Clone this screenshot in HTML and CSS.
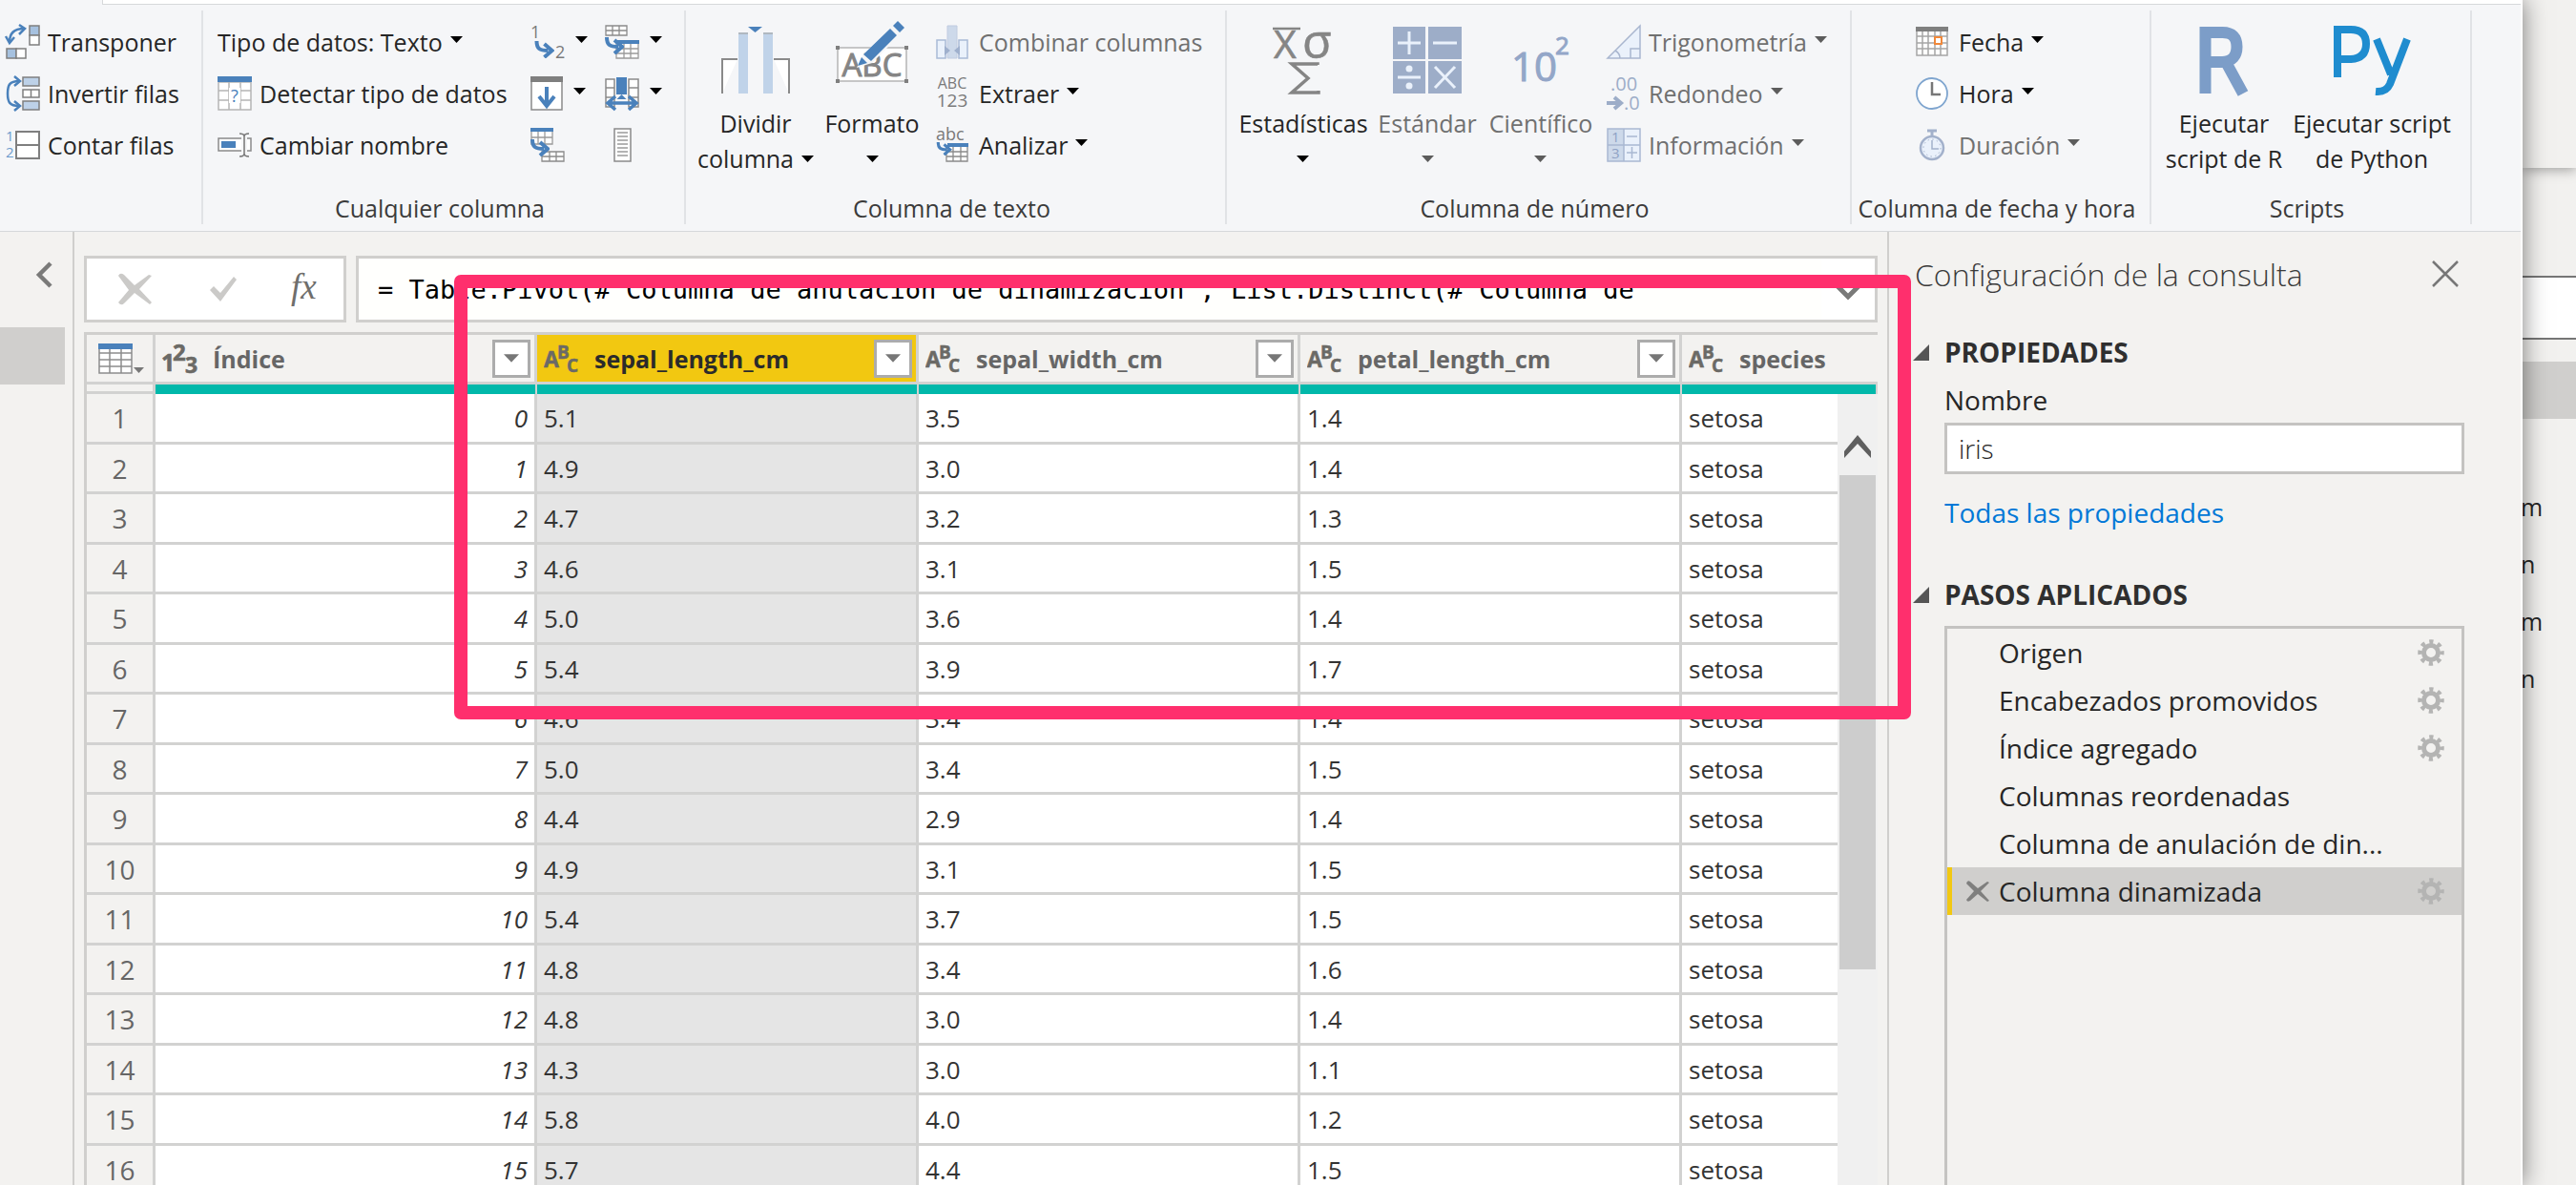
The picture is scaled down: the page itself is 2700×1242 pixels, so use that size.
FILE: index.html
```html
<!DOCTYPE html>
<html lang="es">
<head>
<meta charset="utf-8">
<meta name="viewport" content="width=device-width, initial-scale=1">
<title>Editor de Power Query</title>
<link rel="stylesheet" href="styles.css">
</head>
<body>
<svg class="defs" aria-hidden="true">
  <symbol id="caret" viewBox="0 0 13 7"><path d="M0 0h13L6.500 7z" fill="currentColor"/></symbol>
  <symbol id="gear" viewBox="0 0 28 28"><g fill="none" stroke="#b4b4b3"><circle cx="14" cy="14" r="7.500" stroke-width="5"/><circle cx="14" cy="14" r="11.500" stroke-width="4.500" stroke-dasharray="4.200 4.832" stroke-dashoffset="2.100"/></g></symbol>
  <symbol id="abc" viewBox="0 0 37 32"><g fill="#6b6a66" stroke="#6b6a66" stroke-width=".5" font-family="Open Sans, sans-serif"><text x="0" y="25" font-size="23">A</text><text x="14" y="16" font-size="19">B</text><text x="24" y="30" font-size="19">C</text></g></symbol>
  <symbol id="bend" viewBox="0 0 20 18"><path d="M2 0c0 8 3 10 12 10" fill="none" stroke="#4a81bb" stroke-width="4"/><path d="M10 3l8 7-8 7" fill="none" stroke="#4a81bb" stroke-width="4"/></symbol>
</svg>

<div class="window">
  <header class="ribbon">
    <div class="tab-edge"></div>
    <div class="groups">

      <section class="group g-table">
        <div class="rows">
          <button class="cmd"><svg width="36" height="36" viewBox="0 0 36 36"><path d="M4 18C4 9 9 4 19 4" fill="none" stroke="#4a81bb" stroke-width="2.500"/><path d="M0 12l4 7 5-6M14 0l6 4-6 6" fill="none" stroke="#4a81bb" stroke-width="2.500"/><g stroke="#7f7f7f" stroke-width="1.500"><path d="M25 1h10v10H25z" fill="#a6c1df"/><path d="M25 11h10v10H25z" fill="#fff"/><path d="M1 25h10v10H1z" fill="#a6c1df"/><path d="M11 25h10v10H11z" fill="#fff"/></g></svg>Transponer</button>
          <button class="cmd"><svg width="36" height="36" viewBox="0 0 36 36"><path d="M14 5C4 5 2 9 2 18s2 13 12 13" fill="none" stroke="#4a81bb" stroke-width="2.500"/><path d="M9 0l6 5-6 5M9 26l6 5-6 5" fill="none" stroke="#4a81bb" stroke-width="2.500"/><g stroke="#7f7f7f" stroke-width="1.500"><path d="M18 1h17v9H18zM18 26h17v9H18z" fill="#bdd1e8"/><path d="M18 14h17v8H18zM26.500 14v8" fill="#fff"/></g></svg>Invertir filas</button>
          <button class="cmd"><svg width="36" height="36" viewBox="0 0 36 36"><g fill="#6c9bcd" font-family="Open Sans, sans-serif" font-size="15"><text x="0" y="14">1</text><text x="0" y="31">2</text></g><path d="M11 4h24v28H11zM11 18h24" fill="#fff" stroke="#7f7f7f" stroke-width="2"/></svg>Contar filas</button>
        </div>
      </section>

      <section class="group g-any">
        <div class="panels">
          <div class="rows rows-any">
            <button class="cmd">Tipo de datos: Texto<svg class="caret"><use href="#caret"/></svg></button>
            <button class="cmd"><svg width="36" height="36" viewBox="0 0 36 36"><path d="M1 6h34v29H1zM12 6v29M24 6v29M1 15h34M1 25h34" fill="#fff" stroke="#b5b5b5" stroke-width="1.500"/><path d="M0 0h36v6H0z" fill="#4a81bb"/><path d="M12 12h12v16H12z" fill="#fff"/><text x="18" y="27" text-anchor="middle" font-family="Open Sans, sans-serif" font-size="18" fill="#4a81bb">?</text></svg>Detectar tipo de datos</button>
            <button class="cmd"><svg width="36" height="36" viewBox="0 0 36 36"><path d="M1 11h34v13H1z" fill="#fff" stroke="#8a8a8a" stroke-width="1.500"/><path d="M4 14h15v7H4z" fill="#4a81bb"/><path d="M25 9h6v18h-6z" fill="#f5f6f7"/><path d="M28 8v20M23 6q5 0 5 3 0-3 5-3M23 30q5 0 5-3 0 3 5 3" fill="none" stroke="#777" stroke-width="1.500"/></svg>Cambiar nombre</button>
          </div>
          <div class="rows icons">
            <button class="cmd" aria-label="Reemplazar los valores"><svg width="36" height="36" viewBox="0 0 36 36"><g fill="#7a7a7a" font-family="Open Sans, sans-serif" font-size="18"><text x="0" y="14">1</text><text x="26" y="35">2</text></g><use href="#bend" x="4" y="17" width="21" height="18"/></svg><svg class="caret"><use href="#caret"/></svg></button>
            <button class="cmd" aria-label="Rellenar"><svg width="34" height="36" viewBox="0 0 34 36"><path d="M1 3h32v32H1z" fill="#fff" stroke="#8a8a8a" stroke-width="1.500"/><path d="M0 0h34v6H0z" fill="#7f7f7f"/><path d="M17 11v18M9 21l8 10 8-10" fill="none" stroke="#4a81bb" stroke-width="4"/></svg><svg class="caret"><use href="#caret"/></svg></button>
            <button class="cmd" aria-label="Anulación de dinamización de columnas"><svg width="36" height="36" viewBox="0 0 36 36"><path d="M1 3h22v14H1zM8 3v14M15 3v14M1 10h22" fill="#fff" stroke="#9a9a9a" stroke-width="1.300"/><path d="M0 0h24v4H0z" fill="#4a81bb"/><path d="M12 25h23v10H12zM20 25v10M27 25v10M12 30h23" fill="#fff" stroke="#8a8a8a" stroke-width="1.300"/><use href="#bend" x="0" y="12" width="20" height="18"/></svg></button>
          </div>
          <div class="rows icons">
            <button class="cmd" aria-label="Columna dinamizada"><svg width="36" height="36" viewBox="0 0 36 36"><path d="M1 1h22v10H1zM8 1v10M15 1v10M1 6h22" fill="#fff" stroke="#8a8a8a" stroke-width="1.300"/><path d="M12 19h23v16H12zM20 19v16M27 19v16M12 25h23M12 30h23" fill="#fff" stroke="#9a9a9a" stroke-width="1.300"/><path d="M12 16h24v4H12z" fill="#4a81bb"/><use href="#bend" x="0" y="13" width="20" height="18"/></svg><svg class="caret"><use href="#caret"/></svg></button>
            <button class="cmd" aria-label="Mover"><svg width="36" height="36" viewBox="0 0 36 36"><path d="M1 3h9v29H1zM1 12h9M1 22h9M25 3h10v29H25zM25 12h10M25 22h10" fill="#fff" stroke="#8a8a8a" stroke-width="1.500"/><path d="M12 1h11v18H12z" fill="#4a81bb"/><path d="M17.500 19l5 5h-10z" fill="#4a81bb"/><path d="M5 28h26M11 21l-8 7 8 7M25 21l8 7-8 7" fill="none" stroke="#4a81bb" stroke-width="3.500"/></svg><svg class="caret"><use href="#caret"/></svg></button>
            <button class="cmd" aria-label="Convertir en lista"><svg width="36" height="36" viewBox="0 0 36 36"><path d="M10 1h17v34H10z" fill="#fff" stroke="#8a8a8a" stroke-width="1.500"/><path d="M13 5h11M13 9h11M13 13h11M13 17h11M13 21h11M13 25h11M13 29h11" stroke="#9a9a9a" stroke-width="1.500"/></svg></button>
          </div>
        </div>
        <h2>Cualquier columna</h2>
      </section>

      <section class="group g-text">
        <div class="panels">
          <button class="big b-split"><svg width="72" height="70" viewBox="0 0 72 70"><path d="M28 0h15l-7.500 6z" fill="#4a81bb"/><path d="M1 70V34h16M55 34h16v36" fill="#fff" stroke="#8a8a8a" stroke-width="2"/><path d="M18 6h10v64H18zM44 6h10v64H44z" fill="#c0d3e9"/><path d="M18 7h10M44 7h10" stroke="#b0b8c0" stroke-width="2"/></svg><span>Dividir<br>columna<svg class="caret after-word"><use href="#caret"/></svg></span></button>
          <button class="big b-format"><svg width="76" height="70" viewBox="0 0 76 70"><path d="M2 22h72v35H2z" fill="#fff" stroke="#b5b5b5" stroke-width="1.500"/><text x="38" y="52" text-anchor="middle" font-family="Open Sans, sans-serif" font-size="33" fill="#858585" stroke="#858585">ABC</text><g fill="#7f7f7f"><path d="M0 20h4v4H0zM72 20h4v4h-4zM0 55h4v4H0zM72 55h4v4h-4z"/></g><path d="M22 43l6-13L60-1l9 8-31 31z" fill="#f5f6f7"/><path d="M23 41l4-9 6 6zM29 29L57 2l7 7-27 27z" fill="#4a81bb"/><path d="M60-1l5-5 7 7-5 5z" fill="#4a81bb"/></svg><span>Formato<br><svg class="caret"><use href="#caret"/></svg></span></button>
          <div class="rows">
            <button class="cmd" disabled><svg width="34" height="36" viewBox="0 0 34 36"><path d="M1 16h9v19H1zM24 16h9v19h-9z" fill="#eaf1fb" stroke="#a9bad6" stroke-width="1.500"/><path d="M12 1h10v34H12z" fill="#cdd9ea" stroke="#c0cbe0"/><path d="M9 22l6 5-6 5zM25 22l-6 5 6 5z" fill="#9fb0cd"/></svg>Combinar columnas</button>
            <button class="cmd"><svg width="34" height="36" viewBox="0 0 34 36"><g fill="#7a7a7a" font-family="Open Sans, sans-serif"><text x="17" y="13" text-anchor="middle" font-size="16">ABC</text><text x="17" y="32" text-anchor="middle" font-size="19">123</text></g></svg>Extraer<svg class="caret"><use href="#caret"/></svg></button>
            <button class="cmd"><svg width="34" height="36" viewBox="0 0 34 36"><text x="0" y="13" font-family="Open Sans, sans-serif" font-size="18" fill="#7a7a7a">abc</text><path d="M11 19h22v16H11zM18 19v16M26 19v16M11 25h22M11 30h22" fill="#fff" stroke="#8a8a8a" stroke-width="1.300"/><path d="M12 16h22v4H12z" fill="#4a81bb"/><use href="#bend" x="0" y="15" width="17" height="14"/></svg>Analizar<svg class="caret"><use href="#caret"/></svg></button>
          </div>
        </div>
        <h2>Columna de texto</h2>
      </section>

      <section class="group g-number">
        <div class="panels">
          <button class="big b-stats"><svg width="64" height="70" viewBox="0 0 64 70"><path d="M0 2h29" stroke="#858585" stroke-width="2.500"/><g fill="#858585" stroke="#858585" stroke-width=".6" font-family="Open Sans, sans-serif"><text x="1" y="33" font-size="41">X</text><text x="31" y="33" font-size="50">σ</text></g><path d="M47 40v-1H20l17 15-17 15h28v-2" fill="none" stroke="#858585" stroke-width="3.500"/></svg><span>Estadísticas<br><svg class="caret"><use href="#caret"/></svg></span></button>
          <button class="big b-standard" disabled><svg width="72" height="70" viewBox="0 0 72 70"><path d="M0 0h34v34H0zM37 0h35v34H37zM0 36h34v34H0zM37 36h35v34H37z" fill="#9dadc8"/><path d="M5 17h24M17 5v24M42 17h25M5 53h24M44 42l21 22M65 42L44 64" stroke="#eaf1fb" stroke-width="3"/><circle cx="17" cy="44" r="3.500" fill="#eaf1fb"/><circle cx="17" cy="62" r="3.500" fill="#eaf1fb"/></svg><span>Estándar<br><svg class="caret"><use href="#caret"/></svg></span></button>
          <button class="big b-science" disabled><svg width="60" height="70" viewBox="0 0 60 70"><g fill="#93a6c8" stroke="#93a6c8" font-family="Open Sans, sans-serif"><text x="-1" y="57" font-size="42">10</text><text x="45" y="29" font-size="26">2</text></g></svg><span>Científico<br><svg class="caret"><use href="#caret"/></svg></span></button>
          <div class="rows">
            <button class="cmd" disabled><svg width="36" height="36" viewBox="0 0 36 36"><path d="M1 35L35 1v34zM25 35V25h10M9 27q5 3 5 8" fill="#eaf1fb" stroke="#a9b6cf" stroke-width="1.500"/></svg>Trigonometría<svg class="caret"><use href="#caret"/></svg></button>
            <button class="cmd" disabled><svg width="36" height="36" viewBox="0 0 36 36"><g fill="#9dadc8" font-family="Open Sans, sans-serif" font-size="20"><text x="4" y="15">.00</text><text x="18" y="35">.0</text></g><path d="M0 28h14M8 22l7 6-7 6" fill="none" stroke="#9dadc8" stroke-width="4"/></svg>Redondeo<svg class="caret"><use href="#caret"/></svg></button>
            <button class="cmd" disabled><svg width="36" height="36" viewBox="0 0 36 36"><path d="M1 1h17v34H1z" fill="#cdd9ea"/><path d="M18 1h17v34H18z" fill="#eaf1fb"/><path d="M1 1h34v34H1zM18 1v34M1 18h34M21 9h11M21 26h11M26.500 20v12" fill="none" stroke="#a9b8d2" stroke-width="1.500"/><g fill="#8fa2c5" font-family="Open Sans, sans-serif" font-size="15"><text x="5" y="15">1</text><text x="5" y="32">3</text></g></svg>Información<svg class="caret"><use href="#caret"/></svg></button>
          </div>
        </div>
        <h2>Columna de número</h2>
      </section>

      <section class="group g-date">
        <div class="rows">
          <button class="cmd"><svg width="34" height="36" viewBox="0 0 34 36"><path d="M1 6h32v26H1zM7 6v26M13 6v26M20 6v26M26 6v26M1 12h32M1 19h32M1 25h32" fill="#fff" stroke="#a5a5a5" stroke-width="1.500"/><path d="M0 2h34v5H0z" fill="#7f7f7f"/><path d="M20 13h7v7h-7z" fill="#fff" stroke="#f0883a" stroke-width="2"/></svg>Fecha<svg class="caret"><use href="#caret"/></svg></button>
          <button class="cmd"><svg width="34" height="36" viewBox="0 0 34 36"><circle cx="17" cy="18" r="16" fill="#fff" stroke="#7fa5cf" stroke-width="1.800"/><path d="M17 6v13h9" fill="none" stroke="#777" stroke-width="2.500"/></svg>Hora<svg class="caret"><use href="#caret"/></svg></button>
          <button class="cmd" disabled><svg width="34" height="36" viewBox="0 0 34 36"><circle cx="17" cy="21" r="12" fill="#eaf1fb" stroke="#a3b1cb" stroke-width="2.500"/><circle cx="17" cy="21" r="9" fill="none" stroke="#a3b1cb" stroke-dasharray="1.500 3.210"/><path d="M12 3h10M17 3v6" stroke="#a3b1cb" stroke-width="3"/><path d="M17 13v9h7" fill="none" stroke="#a3b1cb" stroke-width="1.500"/></svg>Duración<svg class="caret"><use href="#caret"/></svg></button>
        </div>
        <h2>Columna de fecha y hora</h2>
      </section>

      <section class="group g-scripts">
        <div class="panels">
          <button class="big b-r"><svg width="56" height="70" viewBox="0 0 56 70"><path d="M8.500 70V6h18q15 0 15 15t-15 16h-18M30 37l18 33" fill="none" stroke="#7c9dc8" stroke-width="12"/></svg><span>Ejecutar<br>script de R</span></button>
          <button class="big b-py"><svg width="82" height="70" viewBox="0 0 82 70"><path d="M5 53V3h14q16 0 16 15T19 34H5" fill="none" stroke="#1f8ccf" stroke-width="8"/><path d="M46 13l15 37M78 13L60 60q-4 9-15 8" fill="none" stroke="#1f8ccf" stroke-width="8"/></svg><span>Ejecutar script<br>de Python</span></button>
        </div>
        <h2>Scripts</h2>
      </section>
    </div>
  </header>

  <div class="work">
    <nav class="queries" aria-label="Consultas">
      <button class="expand" aria-label="Expandir"><svg width="18" height="28" viewBox="0 0 18 28"><path d="M16 2L4 14l12 12" fill="none" stroke="#7a7a79" stroke-width="4.500"/></svg></button>
      <div class="query-current"></div>
    </nav>

    <main class="editor">
      <div class="formula">
        <div class="formula-tools">
          <button aria-label="Cancelar"><svg width="40" height="36" viewBox="0 0 40 36"><path d="M0 4q2-4 6-1l11 11L32 3l3 1-13 14 13 14-2 2-16-12L6 33q-3 3-6-1l11-13z" fill="#cbcac8"/></svg></button>
          <button aria-label="Aceptar"><svg width="36" height="36" viewBox="0 0 36 36"><path d="M5 19l4-4 7 7L30 5l3 3-17 23z" fill="#cbcac8"/></svg></button>
          <button aria-label="Agregar paso"><svg width="32" height="38" viewBox="0 0 32 38"><text x="3" y="29" font-family="Liberation Serif, serif" font-style="italic" font-size="37" fill="#6f6e6c">fx</text></svg></button>
        </div>
        <div class="formula-box">
          <input type="text" aria-label="Barra de fórmulas" value="= Table.Pivot(#&quot;Columna de anulación de dinamización&quot;, List.Distinct(#&quot;Columna de">
          <button aria-label="Expandir barra de fórmulas"><svg width="26" height="18" viewBox="0 0 26 18"><path d="M2 3l11 11L24 3" fill="none" stroke="#7a7a79" stroke-width="5"/></svg></button>
        </div>
      </div>

      <div class="grid">
        <table>
          <colgroup><col class="c-num"><col class="c-data"><col class="c-data"><col class="c-data"><col class="c-data"><col></colgroup>
          <thead>
            <tr class="head">
              <th><button class="corner" aria-label="Menú de la tabla"><svg width="49" height="34" viewBox="0 0 49 34"><path d="M1 5h34v27H1zM12 5v27M24 5v27M1 11h34M1 18h34M1 25h34" fill="#fff" stroke="#8d8d8d" stroke-width="1.500"/><path d="M0 1h36v6H0z" fill="#4a81bb"/><path d="M37 26h11l-5.500 6z" fill="#777"/></svg></button></th>
              <th><div class="th"><svg width="37" height="32" viewBox="0 0 37 32"><g fill="#6b6a66" stroke="#6b6a66" stroke-width=".6" font-family="Open Sans, sans-serif"><text x="-1" y="29" font-size="25">1</text><text x="11" y="18" font-size="24">2</text><text x="24" y="31" font-size="23">3</text></g></svg><span>Índice</span><button aria-label="Filtrar"><svg width="16" height="9"><use href="#caret"/></svg></button></div></th>
              <th class="sel"><div class="th"><svg width="37" height="32"><use href="#abc"/></svg><span>sepal_length_cm</span><button aria-label="Filtrar"><svg width="16" height="9"><use href="#caret"/></svg></button></div></th>
              <th><div class="th"><svg width="37" height="32"><use href="#abc"/></svg><span>sepal_width_cm</span><button aria-label="Filtrar"><svg width="16" height="9"><use href="#caret"/></svg></button></div></th>
              <th><div class="th"><svg width="37" height="32"><use href="#abc"/></svg><span>petal_length_cm</span><button aria-label="Filtrar"><svg width="16" height="9"><use href="#caret"/></svg></button></div></th>
              <th><div class="th"><svg width="37" height="32"><use href="#abc"/></svg><span>species</span></div></th>
            </tr>
            <tr class="quality"><td></td><td></td><td></td><td></td><td></td><td></td></tr>
          </thead>
          <tbody>
            <tr><th>1</th><td>0</td><td>5.1</td><td>3.5</td><td>1.4</td><td>setosa</td></tr>
            <tr><th>2</th><td>1</td><td>4.9</td><td>3.0</td><td>1.4</td><td>setosa</td></tr>
            <tr><th>3</th><td>2</td><td>4.7</td><td>3.2</td><td>1.3</td><td>setosa</td></tr>
            <tr><th>4</th><td>3</td><td>4.6</td><td>3.1</td><td>1.5</td><td>setosa</td></tr>
            <tr><th>5</th><td>4</td><td>5.0</td><td>3.6</td><td>1.4</td><td>setosa</td></tr>
            <tr><th>6</th><td>5</td><td>5.4</td><td>3.9</td><td>1.7</td><td>setosa</td></tr>
            <tr><th>7</th><td>6</td><td>4.6</td><td>3.4</td><td>1.4</td><td>setosa</td></tr>
            <tr><th>8</th><td>7</td><td>5.0</td><td>3.4</td><td>1.5</td><td>setosa</td></tr>
            <tr><th>9</th><td>8</td><td>4.4</td><td>2.9</td><td>1.4</td><td>setosa</td></tr>
            <tr><th>10</th><td>9</td><td>4.9</td><td>3.1</td><td>1.5</td><td>setosa</td></tr>
            <tr><th>11</th><td>10</td><td>5.4</td><td>3.7</td><td>1.5</td><td>setosa</td></tr>
            <tr><th>12</th><td>11</td><td>4.8</td><td>3.4</td><td>1.6</td><td>setosa</td></tr>
            <tr><th>13</th><td>12</td><td>4.8</td><td>3.0</td><td>1.4</td><td>setosa</td></tr>
            <tr><th>14</th><td>13</td><td>4.3</td><td>3.0</td><td>1.1</td><td>setosa</td></tr>
            <tr><th>15</th><td>14</td><td>5.8</td><td>4.0</td><td>1.2</td><td>setosa</td></tr>
            <tr><th>16</th><td>15</td><td>5.7</td><td>4.4</td><td>1.5</td><td>setosa</td></tr>
          </tbody>
        </table>
        <div class="scrollbar">
          <button aria-label="Desplazar hacia arriba"><svg width="28" height="24" viewBox="0 0 28 24"><path d="M0 17L14 0l14 17v7L14 9 0 24z" fill="#5f5f5f"/></svg></button>
          <div class="thumb"></div>
        </div>
      </div>
    </main>

    <aside class="settings">
      <div class="settings-head">
        <h1>Configuración de la consulta</h1>
        <button aria-label="Cerrar"><svg width="28" height="28" viewBox="0 0 28 28"><path d="M1 1l26 26M27 1L1 27" stroke="#777" stroke-width="2.500"/></svg></button>
      </div>
      <h3><svg width="17" height="17"><path d="M17 0v17H0z" fill="#555"/></svg>PROPIEDADES</h3>
      <div class="props">
        <label for="query-name">Nombre</label>
        <input id="query-name" type="text" value="iris">
        <a href="#todas">Todas las propiedades</a>
      </div>
      <h3><svg width="17" height="17"><path d="M17 0v17H0z" fill="#555"/></svg>PASOS APLICADOS</h3>
      <ul class="steps">
        <li><span>Origen</span><button aria-label="Configurar"><svg width="28" height="28"><use href="#gear"/></svg></button></li>
        <li><span>Encabezados promovidos</span><button aria-label="Configurar"><svg width="28" height="28"><use href="#gear"/></svg></button></li>
        <li><span>Índice agregado</span><button aria-label="Configurar"><svg width="28" height="28"><use href="#gear"/></svg></button></li>
        <li><span>Columnas reordenadas</span></li>
        <li><span>Columna de anulación de din...</span></li>
        <li class="current"><button class="remove" aria-label="Eliminar"><svg width="26" height="24" viewBox="0 0 26 24"><path d="M1 4q1-4 4-2l8 7L23 2l2 1-9 9 9 10-2 1-10-8-8 7q-3 2-4-1l8-9z" fill="#7f7f7e"/></svg></button><span>Columna dinamizada</span><button aria-label="Configurar"><svg width="28" height="28"><use href="#gear"/></svg></button></li>
      </ul>
    </aside>
  </div>
</div>

<div class="behind">
  <div class="behind-top"></div>
  <div class="behind-search"></div>
  <div class="behind-item"></div>
  <ul><li>m</li><li>n</li><li>m</li><li>n</li></ul>
</div>

<div class="highlight"></div>
</body>
</html>
```
FILE: styles.css
```css
* { box-sizing: border-box; }

body {
  margin: 0;
  height: 100vh;
  display: flex;
  overflow: hidden;
  position: relative;
  background: #f2f1ef;
  color: #262626;
  font-family: "Open Sans", "Noto Sans", sans-serif;
  font-size: 25px;
}

h1, h2, h3, ul { margin: 0; padding: 0; font-weight: 400; }
ul { list-style: none; }
svg { display: block; flex: none; overflow: visible; }
.defs { position: absolute; width: 0; height: 0; }

button {
  margin: 0;
  padding: 0;
  border: 0;
  background: none;
  color: inherit;
  font: inherit;
}

.window {
  flex: 1;
  min-width: 0;
  display: flex;
  flex-direction: column;
  position: relative;
  z-index: 1;
  background: #f3f2f0;
  border-right: 2px solid #fff;
  box-shadow: 0 0 24px rgba(0, 0, 0, 0.5);
}

/* Ribbon */
.ribbon {
  flex: none;
  height: 243px;
  background: #f5f6f8;
  border-bottom: 1px solid #d6d8da;
}
.tab-edge {
  height: 5px;
  margin-left: 107px;
  background: #fff;
  border-left: 1px solid #d6d8da;
  border-bottom: 1px solid #d6d8da;
}
.groups { display: flex; padding-top: 6px; }
.group {
  flex: none;
  height: 224px;
  padding-top: 6px;
  border-right: 2px solid #e1e3e6;
  display: flex;
  flex-direction: column;
  justify-content: space-between;
}
.group h2 {
  padding-right: 8px;
  font-size: 25px;
  line-height: 34px;
  text-align: center;
  white-space: nowrap;
  color: #3b3b3b;
}
.g-table { width: 213px; padding-left: 6px; }
.g-any { width: 506px; }
.g-text { width: 567px; }
.g-text .rows { padding-left: 18px; }
.g-number { width: 655px; }
.g-date { width: 314px; }
.g-date .rows { padding-left: 67px; }
.g-scripts { width: 336px; }

.panels { display: flex; }
.rows { display: flex; flex-direction: column; }
.rows-any { width: 343px; padding-left: 15px; }
.icons { width: 78px; }

.cmd {
  height: 54px;
  display: flex;
  align-items: center;
  gap: 8px;
  white-space: nowrap;
}
.g-text .cmd, .g-date .cmd, .icons .cmd { gap: 11px; }
.caret { width: 13px; height: 7px; color: #000; }
.cmd .caret { margin-bottom: 6px; }
.g-text .cmd .caret, .g-date .cmd .caret { margin-left: -3px; }
button:disabled { color: #707070; }
button:disabled .caret { color: #5c5c5c; }

.big {
  display: flex;
  flex-direction: column;
  align-items: center;
  padding-top: 11px;
  gap: 13px;
  line-height: 37px;
  white-space: nowrap;
}
.big .caret { display: inline-block; vertical-align: middle; margin-bottom: 6px; }
.big .after-word { margin-left: 8px; }
.b-split { width: 146px; }
.b-format { width: 98px; }
.b-stats { width: 160px; }
.b-standard { width: 100px; }
.b-science { width: 138px; }
.b-r { width: 152px; }
.b-py { width: 158px; }

/* Work area */
.work { flex: 1; min-height: 0; display: flex; }
.queries {
  flex: none;
  width: 78px;
  border-right: 2px solid #d0cfcd;
  padding: 31px 8px 0 0;
}
.expand { display: block; margin-left: 37px; margin-bottom: 41px; }
.query-current { height: 60px; background: #d0cfcd; }

.editor {
  flex: 1;
  min-width: 0;
  display: flex;
  flex-direction: column;
  gap: 10px;
  padding: 25px 10px 0;
}
.formula { display: flex; gap: 10px; height: 70px; }
.formula-tools {
  flex: none;
  width: 275px;
  padding: 0 26px 0 33px;
  display: flex;
  align-items: center;
  justify-content: space-between;
  background: #fff;
  border: 3px solid #d0cfcd;
}
.formula-box {
  flex: 1;
  min-width: 0;
  display: flex;
  background: #fff;
  border: 3px solid #d0cfcd;
}
.formula-box input {
  flex: 1;
  min-width: 0;
  padding: 0 0 0 20px;
  border: 0;
  background: #fffffd;
  color: #000;
  font: 27px "DejaVu Sans Mono", monospace;
}
.formula-box button { width: 56px; padding: 6px 15px 0; }

.grid {
  flex: 1;
  min-height: 0;
  overflow: hidden;
  position: relative;
  border-top: 3px solid #d0cfcd;
  border-left: 3px solid #d0cfcd;
}
table {
  width: 100%;
  table-layout: fixed;
  border-collapse: separate;
  border-spacing: 0;
}
.c-num { width: 72px; }
.c-data { width: 400px; }
th, td {
  padding: 0 7px;
  border-right: 3px solid #d2d2d1;
  border-bottom: 3px solid #d2d2d1;
  text-align: left;
  white-space: nowrap;
}
th:last-child, td:last-child { border-right: 0; }
.head th { height: 52px; padding: 0 4px 0 7px; color: #666; }
.head th.sel { background: #f2c811; color: #2b2b2b; }
.corner { padding-left: 5px; display: block; }
.th { display: flex; align-items: center; gap: 16px; font-weight: 700; font-size: 25px; }
.th button {
  width: 40px;
  height: 40px;
  margin-left: auto;
  display: flex;
  align-items: center;
  justify-content: center;
  background: #fff;
  border: 3px solid #acacac;
  color: #777;
}
.quality td { height: 10px; padding: 0; background: #01b8aa; border-bottom: 0; border-right: 2px solid #d2d2d1; }
.quality td:first-child { background: none; border-bottom: 3px solid #d2d2d1; border-right-width: 3px; }

tbody tr { height: 52px; }
tbody tr:nth-child(odd) { height: 53px; }
tbody th { padding: 0; font-weight: 400; font-size: 28px; line-height: 34px; text-align: center; color: #666; }
tbody td { background: #fff; color: #333; font-size: 26px; line-height: 34px; }
tbody td:nth-child(2) { font-style: italic; text-align: right; }
tbody td:nth-child(3) { background: #e5e5e5; }

/* The scroll bar lies over the right edge of the rows, below the column heads */
.scrollbar {
  position: absolute;
  top: 62px;
  right: 0;
  bottom: 0;
  width: 42px;
  padding: 0 2px;
  background: #f0f0f0;
}
.scrollbar button { display: block; width: 38px; height: 85px; padding: 25px 5px 0; }
.thumb { height: 518px; background: #cdcdcd; }

/* Query settings */
.settings {
  flex: none;
  width: 664px;
  display: flex;
  flex-direction: column;
  padding: 20px 59px 0 25px;
  border-left: 2px solid #d0cfcd;
}
.settings-head {
  display: flex;
  align-items: center;
  justify-content: space-between;
  height: 48px;
  margin-bottom: 38px;
  padding-right: 6px;
}
.settings h1 { font-size: 32px; font-weight: 300; padding-left: 2px; white-space: nowrap; color: #3b3b3b; }
.settings h3 {
  display: flex;
  align-items: center;
  gap: 16px;
  line-height: 40px;
  font-size: 28px;
  font-weight: 700;
  color: #2f2f2f;
}
.props {
  display: flex;
  flex-direction: column;
  margin: 10px 0 46px 33px;
  font-size: 28px;
  line-height: 40px;
}
.props input {
  height: 54px;
  margin: 4px 0 20px;
  padding: 0 12px;
  border: 3px solid #c4c3c1;
  background: #fff;
  color: #262626;
  font: 300 28px "Open Sans", "Noto Sans", sans-serif;
}
.props a { color: #0078d7; text-decoration: none; }
.steps {
  flex: 1;
  margin: 13px 0 0 33px;
  border: 3px solid #c4c3c1;
  border-bottom: 0;
  font-size: 28px;
}
.steps li {
  height: 50px;
  padding: 0 18px 0 49px;
  border-left: 5px solid transparent;
  display: flex;
  align-items: center;
  white-space: nowrap;
}
.steps li button:last-child { margin-left: auto; }
.steps .current { background: #d0cfcd; border-left-color: #f2c811; padding-left: 14px; }
.steps .remove { margin-right: 9px; }

/* The window underneath, seen past the right edge */
.behind { flex: none; width: 56px; overflow: hidden; color: #262626; }
.behind-top { height: 176px; box-shadow: 0 2px 12px rgba(0, 0, 0, 0.35); background: #f2f1ef; }
.behind-search { height: 67px; margin-top: 113px; background: #fff; border-top: 2px solid #767676; border-bottom: 2px solid #767676; }
.behind-item { height: 60px; margin-top: 23px; background: #d0cfcd; }
.behind ul { margin: 62px 0 0 -2px; }
.behind li { height: 60px; line-height: 60px; }

/* Callout frame over the pivoted columns */
.highlight {
  position: absolute;
  z-index: 2;
  left: 476px;
  top: 288px;
  width: 1527px;
  height: 466px;
  border: 14px solid #ff2f6d;
  border-radius: 7px;
}
```
